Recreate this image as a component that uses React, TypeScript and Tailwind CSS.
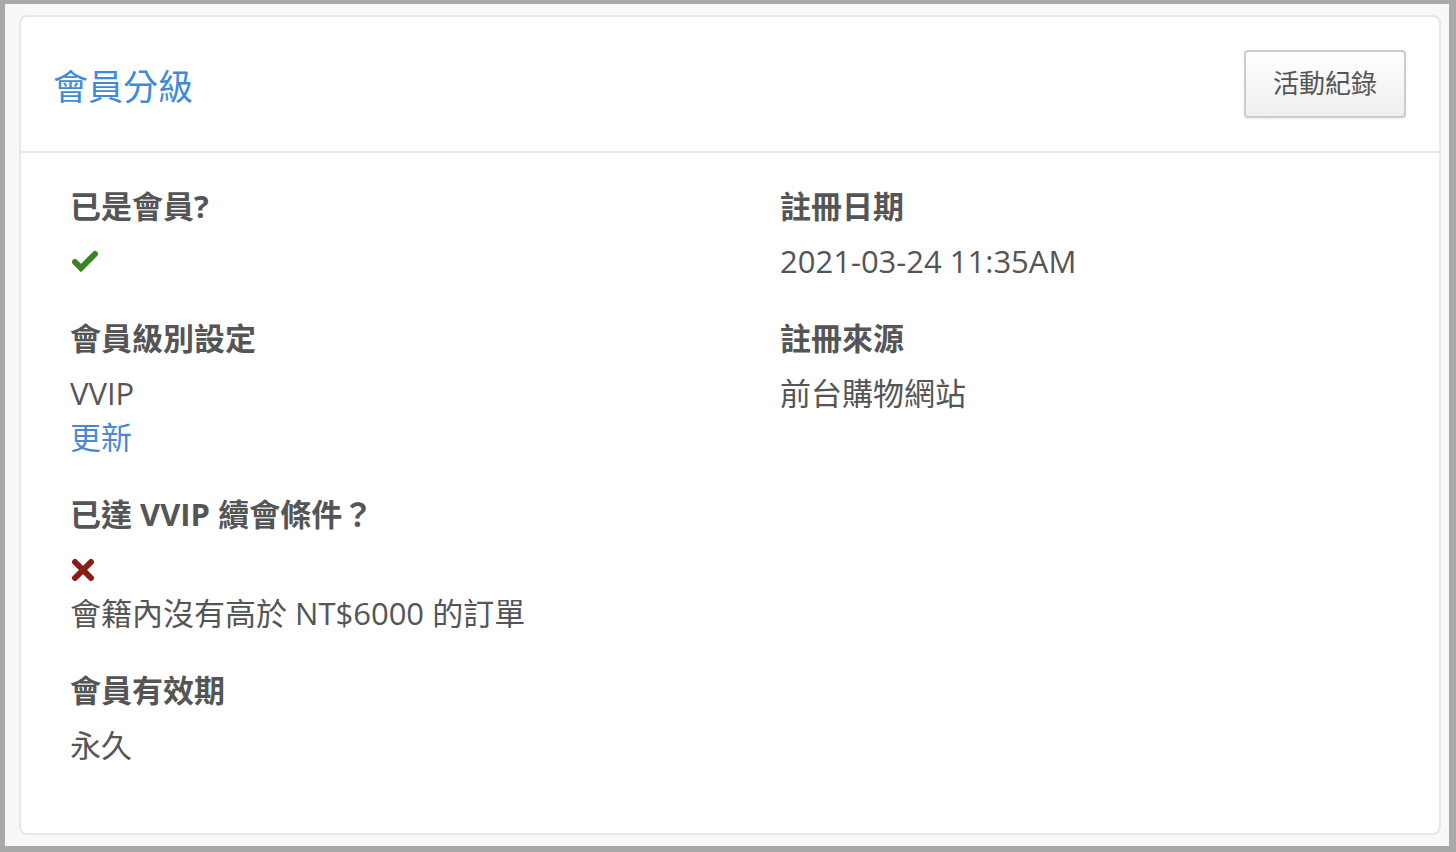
import React from "react";

const font = { fontFamily: '"Open Sans", "Noto Sans CJK TC", sans-serif' };

function Label({ children }: { children: React.ReactNode }) {
  return <div className="text-[31px] leading-[44px] font-bold text-[#555555] mb-[11px]">{children}</div>;
}

function Value({ children }: { children: React.ReactNode }) {
  return <div className="text-[31px] leading-[44px] text-[#555555]">{children}</div>;
}

export default function App() {
  return (
    <div className="w-[1456px] h-[852px] bg-[#a9a9a9] pt-[4px] pl-[5px] pr-[7px] pb-[6px]" style={font}>
      <div className="w-full h-full bg-[#f8f8f8] pt-[11px] pl-[14px] pr-[8px] pb-[11px]">
        <div className="w-full h-full bg-white border-2 border-[#e8e8e8] rounded-[8px] flex flex-col">
          <div className="h-[136px] shrink-0 border-b-2 border-[#e8e8e8] flex items-center justify-between pl-[32px] pr-[33px]">
            <div className="text-[35px] text-[#3f8bd9] leading-none mt-[4px]">會員分級</div>
            <button className="w-[162px] h-[68px] rounded-[4px] border-2 border-[#cccccc] bg-gradient-to-b from-white to-[#eeeeee] text-[26px] leading-none text-[#555555] shadow-[0_1px_2px_rgba(0,0,0,0.08)] pb-[2px]">
              活動紀錄
            </button>
          </div>
          <div className="pl-[49px] pt-[31px] grid grid-cols-[710px_1fr]">
            <div>
              <Label>已是會員?</Label>
              <div className="h-[44px] flex items-center pl-[1px]">
                <svg width="28" height="24" viewBox="0 0 28 24" className="mt-[1px]">
                  <polyline points="4,12 10,18 24,4" fill="none" stroke="#3a8423" strokeWidth="6" strokeLinecap="round" strokeLinejoin="miter" />
                </svg>
              </div>
              <div className="h-[33px]" />
              <Label>會員級別設定</Label>
              <Value>VVIP</Value>
              <div className="text-[31px] leading-[44px] text-[#4a89cf]">更新</div>
              <div className="h-[33px]" />
              <Label>已達 VVIP 續會條件？</Label>
              <div className="h-[44px] flex items-center pl-[1px]">
                <svg width="24" height="24" viewBox="0 0 24 24" className="mt-[1px]">
                  <line x1="4" y1="4" x2="20" y2="20" stroke="#8a1a14" strokeWidth="6" strokeLinecap="round" />
                  <line x1="20" y1="4" x2="4" y2="20" stroke="#8a1a14" strokeWidth="6" strokeLinecap="round" />
                </svg>
              </div>
              <Value>會籍內沒有高於 NT$6000 的訂單</Value>
              <div className="h-[33px]" />
              <Label>會員有效期</Label>
              <Value>永久</Value>
            </div>
            <div>
              <Label>註冊日期</Label>
              <Value>2021-03-24 11:35AM</Value>
              <div className="h-[33px]" />
              <Label>註冊來源</Label>
              <Value>前台購物網站</Value>
            </div>
          </div>
        </div>
      </div>
    </div>
  );
}
